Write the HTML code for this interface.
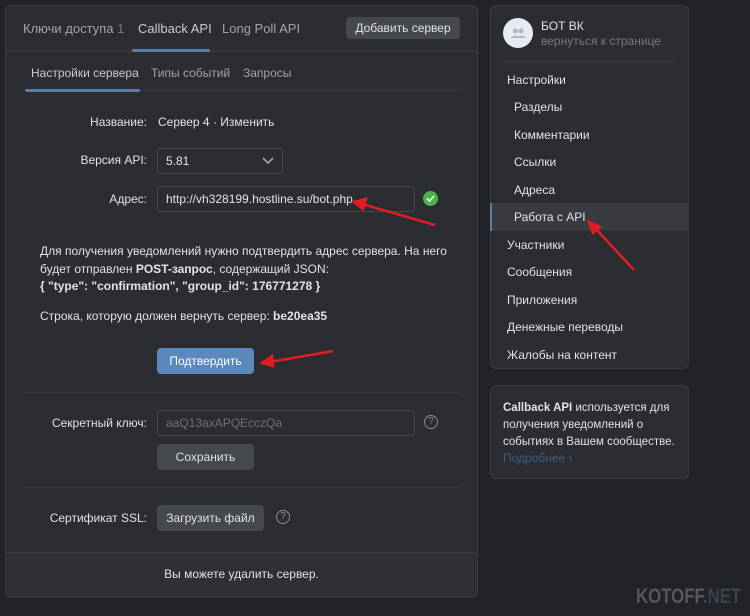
<!DOCTYPE html><html><head><meta charset="utf-8"><style>
*{box-sizing:border-box;margin:0;padding:0}
body{width:750px;height:616px;background:#212326;font-family:"Liberation Sans",sans-serif;font-size:12px;color:#e1e3e6;position:relative;overflow:hidden}
.p{position:absolute;background:#2b2d30;border:1px solid #393b3f;border-radius:6px}
.a{position:absolute;white-space:nowrap}
.btn{position:absolute;background:#45484c;border-radius:4px;color:#e1e3e6;text-align:center}
.inp{position:absolute;border:1px solid #45474b;background:#2b2d30;border-radius:3px;padding:0 8px;color:#e1e3e6}
.hr{position:absolute;height:1px;background:#3b3d41}
.g{color:#a0a4a8}
</style></head><body>
<div class="p" style="left:5px;top:5px;width:473px;height:593px;overflow:hidden"><div style="position:absolute;left:0;right:0;bottom:0;height:45px;background:#2e3034"></div></div>
<div class="a g" style="left:23px;top:21px;font-size:13px">Ключи доступа <span style="color:#76787c">1</span></div>
<div class="a" style="left:138px;top:21px;font-size:13px;color:#c8cbcf">Callback API</div>
<div class="a g" style="left:222px;top:21px;font-size:13px">Long Poll API</div>
<div class="btn" style="left:346px;top:17px;width:114px;height:22px;line-height:22px">Добавить сервер</div>
<div class="hr" style="left:6px;top:51px;width:471px"></div>
<div class="a" style="left:132px;top:49px;width:78px;height:3px;background:#5b7fa6;border-radius:2px"></div>
<div class="a" style="left:31px;top:66px;color:#c8cbcf">Настройки сервера</div>
<div class="a g" style="left:151px;top:66px">Типы событий</div>
<div class="a g" style="left:243px;top:66px">Запросы</div>
<div class="hr" style="left:25px;top:90px;width:435px"></div>
<div class="a" style="left:25px;top:89px;width:115px;height:3px;background:#5b7fa6;border-radius:2px"></div>
<div class="a" style="right:603px;top:115px">Название:</div>
<div class="a" style="left:158px;top:115px">Сервер 4 · Изменить</div>
<div class="a" style="right:603px;top:153px">Версия API:</div>
<div class="inp" style="left:157px;top:148px;width:126px;height:26px;line-height:24px">5.81<svg style="position:absolute;right:8px;top:8px" width="12" height="8"><path d="M1 1l5 5 5-5" stroke="#a0a4a8" stroke-width="1.6" fill="none"/></svg></div>
<div class="a" style="right:603px;top:192px">Адрес:</div>
<div class="inp" style="left:157px;top:186px;width:258px;height:26px;line-height:24px">http://vh328199.hostline.su/bot.php</div>
<div class="a" style="left:423px;top:191px;width:15px;height:15px;border-radius:50%;background:#4bb34b"><svg width="15" height="15"><path d="M4 7.5l2.5 2.5 4.5-5" stroke="#fff" stroke-width="1.6" fill="none"/></svg></div>
<div class="a" style="left:40px;top:243px;line-height:17.5px;white-space:normal;width:430px">Для получения уведомлений нужно подтвердить адрес сервера. На него будет отправлен <b>POST-запрос</b>, содержащий JSON:<br><b>{ "type": "confirmation", "group_id": 176771278 }</b></div>
<div class="a" style="left:40px;top:309px">Строка, которую должен вернуть сервер: <b>be20ea35</b></div>
<div class="btn" style="left:157px;top:348px;width:97px;height:26px;line-height:26px;background:#5b88bd;color:#fff">Подтвердить</div>
<div class="hr" style="left:25px;top:392px;width:435px"></div>
<div class="a" style="right:603px;top:416px">Секретный ключ:</div>
<div class="inp" style="left:157px;top:410px;width:258px;height:26px;line-height:24px;color:#6d7075">aaQ13axAPQEcczQa</div>
<div class="a" style="left:424px;top:415px;width:14px;height:14px;border:1.3px solid #8a8d91;border-radius:50%;color:#8a8d91;font-size:10px;text-align:center;line-height:12px">?</div>
<div class="btn" style="left:157px;top:444px;width:97px;height:26px;line-height:26px">Сохранить</div>
<div class="hr" style="left:25px;top:487px;width:435px"></div>
<div class="a" style="right:603px;top:511px">Сертификат SSL:</div>
<div class="btn" style="left:157px;top:505px;width:107px;height:26px;line-height:26px">Загрузить файл</div>
<div class="a" style="left:276px;top:510px;width:14px;height:14px;border:1.3px solid #8a8d91;border-radius:50%;color:#8a8d91;font-size:10px;text-align:center;line-height:12px">?</div>
<div class="hr" style="left:6px;top:552px;width:471px"></div>
<div class="a" style="left:6px;width:471px;text-align:center;top:567px">Вы можете удалить сервер.</div>

<div class="p" style="left:490px;top:5px;width:199px;height:364px"></div>
<div class="a" style="left:503px;top:18px;width:30px;height:30px;border-radius:50%;background:#e5ebf1"><svg width="30" height="30"><circle cx="12.5" cy="13" r="2.5" fill="#aeb7c2"/><circle cx="18" cy="13" r="2.5" fill="#aeb7c2"/><path d="M8 20c0-3 9-3 9 0zM14 20c0-3 9-3 9 0z" fill="#aeb7c2"/></svg></div>
<div class="a" style="left:541px;top:19px">БОТ ВК</div>
<div class="a" style="left:541px;top:34px;color:#76787c">вернуться к странице</div>
<div class="hr" style="left:503px;top:61px;width:172px"></div>
<div class="a" style="left:507px;top:73px">Настройки</div>
<div class="a" style="left:514px;top:100px">Разделы</div>
<div class="a" style="left:514px;top:128px">Комментарии</div>
<div class="a" style="left:514px;top:155px">Ссылки</div>
<div class="a" style="left:514px;top:183px">Адреса</div>
<div class="a" style="left:490px;top:203px;width:198px;height:28px;background:#393b3f;border-left:2px solid #5b7fa6"></div>
<div class="a" style="left:514px;top:210px">Работа с API</div>
<div class="a" style="left:507px;top:238px">Участники</div>
<div class="a" style="left:507px;top:265px">Сообщения</div>
<div class="a" style="left:507px;top:293px">Приложения</div>
<div class="a" style="left:507px;top:320px">Денежные переводы</div>
<div class="a" style="left:507px;top:348px">Жалобы на контент</div>

<div class="p" style="left:490px;top:385px;width:199px;height:94px"></div>
<div class="a" style="left:503px;top:400px;line-height:17px;white-space:normal;width:184px;font-size:11.5px"><b>Callback API</b> используется для получения уведомлений о событиях в Вашем сообществе.</div>
<div class="a" style="left:503px;top:451px;color:#3e5e86">Подробнее ›</div>
<div class="a" style="left:636px;top:585px;font-size:21px;font-weight:bold;color:#55585c;transform:scaleX(0.8);transform-origin:left">KOTOFF<span style="color:#3b4250">.NET</span></div>

<svg style="position:absolute;left:0;top:0" width="750" height="616">
<g stroke="#e21d25" stroke-width="2.5" fill="#e21d25">
<path d="M435 225L362 204" fill="none"/><path d="M354 202l12-3-3 10z"/>
<path d="M333 351L270 362" fill="none"/><path d="M262 363l10-7 1 10z"/>
<path d="M634 270L595 228" fill="none"/><path d="M589 222l11 5-7 6z"/>
</g></svg>
</body></html>
